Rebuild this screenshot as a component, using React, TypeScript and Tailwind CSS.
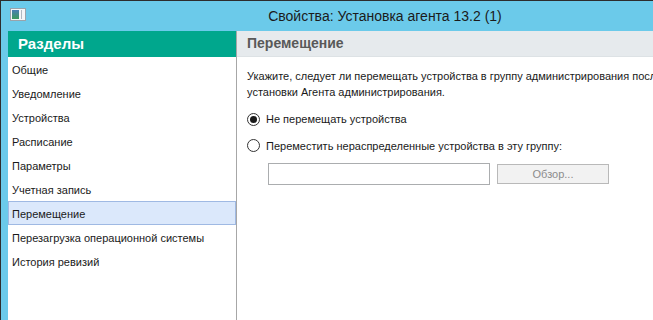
import React from "react";

const sections = [
  "Общие",
  "Уведомление",
  "Устройства",
  "Расписание",
  "Параметры",
  "Учетная запись",
  "Перемещение",
  "Перезагрузка операционной системы",
  "История ревизий",
];

const font = { fontFamily: '"Liberation Sans", "Noto Sans", sans-serif' };

function WindowIcon() {
  return (
    <svg width="16" height="13" viewBox="0 0 16 13">
      <rect x="0.5" y="0.5" width="15" height="12" fill="#f4f6f8" stroke="#9aa3ab" />
      <defs>
        <linearGradient id="g" x1="0" y1="0" x2="0" y2="1">
          <stop offset="0" stopColor="#4a7fb5" />
          <stop offset="1" stopColor="#3c9a5c" />
        </linearGradient>
      </defs>
      <rect x="2" y="2" width="7" height="9" fill="url(#g)" />
      <rect x="11" y="2" width="1" height="9" fill="#b0b8c0" />
    </svg>
  );
}

function Radio({ checked, label }: { checked?: boolean; label: string }) {
  return (
    <div className="flex items-center gap-[6px]">
      <div className="w-[13px] h-[13px] rounded-full border border-[#333] bg-white flex items-center justify-center">
        {checked && <div className="w-[7px] h-[7px] rounded-full bg-[#1a1a1a]" />}
      </div>
      <span className="text-[11px] text-[#1a1a1a]">{label}</span>
    </div>
  );
}

export default function App() {
  return (
    <div
      className="w-[653px] h-[320px] overflow-hidden bg-[#6bcaea] border-t border-l border-[#2d2d2d] flex flex-col"
      style={font}
    >
      <div className="h-[30px] relative flex items-center shrink-0">
        <div className="absolute left-[9px] top-[7px]">
          <WindowIcon />
        </div>
        <div className="w-full text-center pl-[116px] text-[14px] text-[#1b1b1b]">
          Свойства: Установка агента 13.2 (1)
        </div>
      </div>
      <div className="flex-1 flex pl-[7px]">
        <div className="w-[229px] shrink-0 bg-white flex flex-col border-r border-[#a7a7a7]">
          <div className="h-[26px] bg-[#00a78d] text-white font-bold text-[15px] flex items-center pl-[10px]">
            Разделы
          </div>
          {sections.map((s) => (
            <div
              key={s}
              className={`h-[24px] flex items-center pt-[2px] whitespace-nowrap text-[11px] text-[#1a1a1a] ${
                s === "Перемещение"
                  ? "bg-[#dbe8fb] border border-[#9fb9e3] pl-[3px]"
                  : "pl-[4px]"
              }`}
            >
              {s}
            </div>
          ))}
        </div>
        <div className="flex-1 min-w-0 bg-white flex flex-col">
          <div className="h-[26px] bg-[#e6eaed] border-b border-[#dde2e5] flex items-center pl-[10px] text-[14px] font-bold text-[#595959]">
            Перемещение
          </div>
          <div className="pl-[10px] pt-[11px] flex flex-col">
            <p className="text-[11px] leading-[16px] text-[#1a1a1a] whitespace-nowrap">
              Укажите, следует ли перемещать устройства в группу администрирования после
              <br />
              установки Агента администрирования.
            </p>
            <div className="mt-[11px]">
              <Radio checked label="Не перемещать устройства" />
            </div>
            <div className="mt-[10px]">
              <Radio label="Переместить нераспределенные устройства в эту группу:" />
            </div>
            <div className="mt-[9px] pl-[21px] flex items-center gap-[7px]">
              <div className="w-[222px] h-[22px] border border-[#abadaf] bg-white" />
              <button className="w-[112px] h-[20px] border border-[#b9b9b9] bg-[#f2f2f2] text-[11px] text-[#8c8c8c]">
                Обзор...
              </button>
            </div>
          </div>
        </div>
      </div>
    </div>
  );
}
